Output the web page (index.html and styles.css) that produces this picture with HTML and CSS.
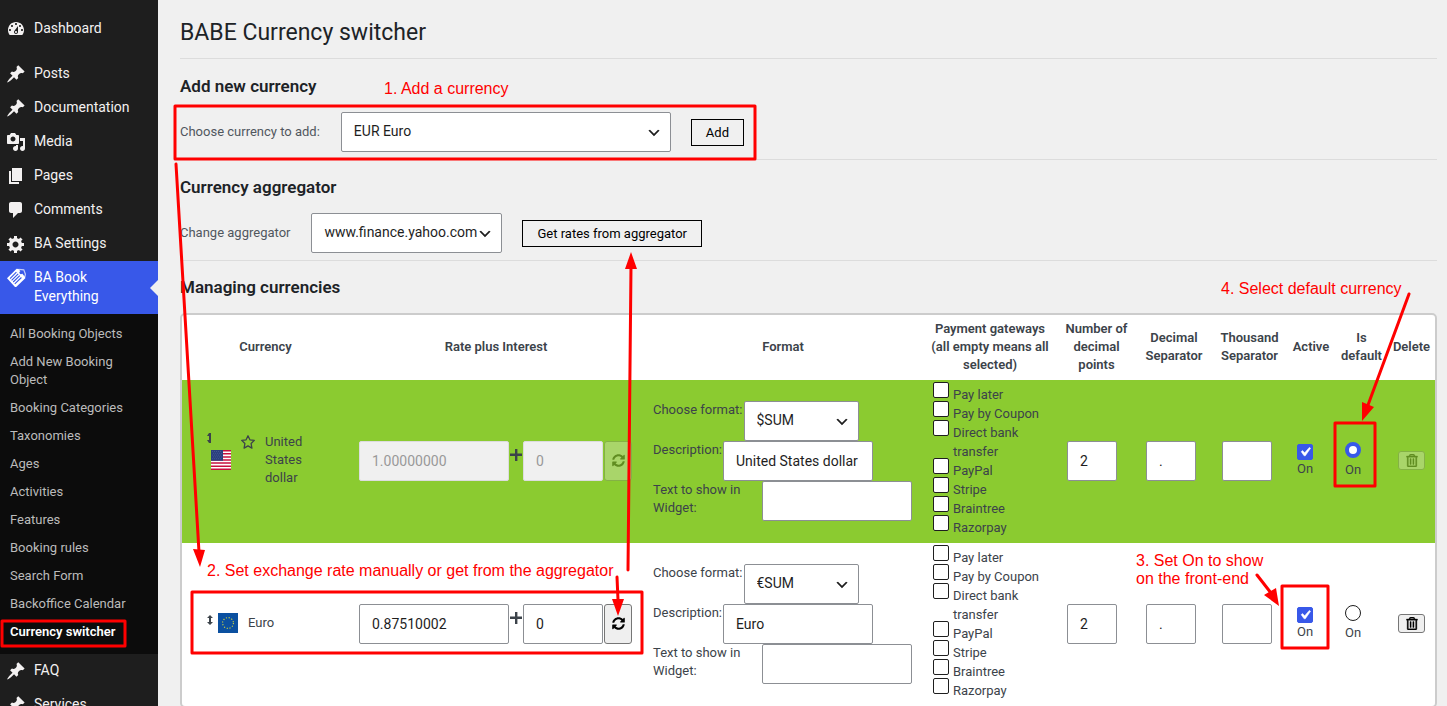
FILE: index.html
```html
<!DOCTYPE html>
<html lang="en">
<head>
    <meta charset="UTF-8">
    <meta name="viewport" content="width=device-width, initial-scale=1.0">
    <title>BABE Currency switcher</title>
    <link rel="stylesheet" href="styles.css">
</head>
<body>
    <svg class="defs" aria-hidden="true">
        <symbol id="i-dashboard" viewBox="0 0 20 20"><path d="M3.76 16h12.48c1.1-1.37 1.76-3.11 1.76-5 0-4.42-3.58-8-8-8s-8 3.58-8 8c0 1.89.66 3.63 1.76 5zM10 4c.55 0 1 .45 1 1s-.45 1-1 1-1-.45-1-1 .45-1 1-1zM6 6c.55 0 1 .45 1 1s-.45 1-1 1-1-.45-1-1 .45-1 1-1zm8 0c.55 0 1 .45 1 1s-.45 1-1 1-1-.45-1-1 .45-1 1-1zm-5.37 5.55L12 7v6c0 1.1-.9 2-2 2s-2-.9-2-2c0-.57.24-1.08.63-1.45zM4 10c.55 0 1 .45 1 1s-.45 1-1 1-1-.45-1-1 .45-1 1-1zm12 0c.55 0 1 .45 1 1s-.45 1-1 1-1-.45-1-1 .45-1 1-1zm-5 3c0-.55-.45-1-1-1s-1 .45-1 1 .45 1 1 1 1-.45 1-1z" fill-rule="evenodd"/></symbol>
        <symbol id="i-pin" viewBox="0 0 20 20"><path d="M10.44 3.02l1.82-1.82 6.36 6.35-1.83 1.82c-1.05-.68-2.48-.57-3.41.36l-.75.75c-.92.93-1.04 2.35-.35 3.41l-1.83 1.82-2.41-2.41-2.8 2.79c-.42.42-3.38 2.71-3.8 2.29s1.86-3.39 2.28-3.81l2.79-2.79L4.1 9.36l1.83-1.82c1.05.69 2.48.57 3.4-.36l.75-.75c.93-.92 1.05-2.35.36-3.41z"/></symbol>
        <symbol id="i-media" viewBox="0 0 20 20"><path d="M13 11V4c0-.55-.45-1-1-1h-1.67L9 1H5L3.67 3H2c-.55 0-1 .45-1 1v7c0 .55.45 1 1 1h10c.55 0 1-.45 1-1zM7 4.5c1.38 0 2.5 1.12 2.5 2.5S8.38 9.5 7 9.5 4.5 8.38 4.5 7 5.62 4.5 7 4.5zM14 6h5v10.5c0 1.38-1.12 2.5-2.5 2.5S14 17.88 14 16.5s1.12-2.5 2.5-2.5c.17 0 .34.02.5.05V9h-3V6zm-4 8.05V13h2v3.5c0 1.38-1.12 2.5-2.5 2.5S7 17.88 7 16.5 8.12 14 9.5 14c.17 0 .34.02.5.05z" fill-rule="evenodd"/></symbol>
        <symbol id="i-page" viewBox="0 0 20 20"><path d="M6 15V2h10v13H6zm-1 1h8v2H3V5h2v11z"/></symbol>
        <symbol id="i-comment" viewBox="0 0 20 20"><path d="M5 2h9c1.1 0 2 .9 2 2v7c0 1.1-.9 2-2 2h-2l-5 5v-5H5c-1.1 0-2-.9-2-2V4c0-1.1.9-2 2-2z"/></symbol>
        <symbol id="i-gear" viewBox="0 0 20 20"><path d="M18 12h-2.18c-.17.7-.44 1.35-.81 1.93l1.54 1.54-2.1 2.1-1.54-1.54c-.58.36-1.23.63-1.91.79V19H8v-2.18c-.68-.16-1.33-.43-1.91-.79l-1.54 1.54-2.12-2.12 1.54-1.54c-.36-.58-.63-1.23-.79-1.91H1V9.03h2.17c.16-.7.44-1.35.8-1.94L2.43 5.55l2.1-2.1 1.54 1.54c.58-.37 1.24-.64 1.93-.81V2h3v2.18c.68.16 1.33.43 1.91.79l1.54-1.54 2.12 2.12-1.54 1.54c.36.59.64 1.24.8 1.94H18V12zm-8.5 1.5c1.66 0 3-1.34 3-3s-1.34-3-3-3-3 1.34-3 3 1.34 3 3 3z" fill-rule="evenodd"/></symbol>
        <symbol id="i-refresh" viewBox="0 0 512 512"><path d="M370.72 133.28C339.458 104.008 298.888 87.962 255.848 88c-77.458.068-144.328 53.178-162.791 126.85-1.344 5.363-6.122 9.15-11.651 9.15H24.103c-7.498 0-13.194-6.807-11.807-14.176C33.933 94.924 134.813 8 256 8c66.448 0 126.791 26.136 171.315 68.685L463.03 40.97C478.149 25.851 504 36.559 504 57.941V192c0 13.255-10.745 24-24 24H345.941c-21.382 0-32.09-25.851-16.971-40.971l41.75-41.749zM32 296h134.059c21.382 0 32.09 25.851 16.971 40.971l-41.75 41.75c31.262 29.273 71.835 45.319 114.876 45.28 77.418-.07 144.315-53.144 162.787-126.849 1.344-5.363 6.122-9.15 11.651-9.15h57.304c7.498 0 13.194 6.807 11.807 14.176C478.067 417.076 377.187 504 256 504c-66.448 0-126.791-26.136-171.315-68.685L48.97 471.03C33.851 486.149 8 475.441 8 454.059V320c0-13.255 10.745-24 24-24z"/></symbol>
        <symbol id="i-trash" viewBox="0 0 448 512"><path stroke="currentColor" stroke-width="14" d="M268 416h24a12 12 0 0 0 12-12V188a12 12 0 0 0-12-12h-24a12 12 0 0 0-12 12v216a12 12 0 0 0 12 12zM432 80h-82.41l-34-56.7A48 48 0 0 0 274.41 0H173.59a48 48 0 0 0-41.16 23.3L98.41 80H16A16 16 0 0 0 0 96v16a16 16 0 0 0 16 16h16v336a48 48 0 0 0 48 48h288a48 48 0 0 0 48-48V128h16a16 16 0 0 0 16-16V96a16 16 0 0 0-16-16zM171.84 50.91A6 6 0 0 1 177 48h94a6 6 0 0 1 5.15 2.91L293.61 80H154.39zM368 464H80V128h288zm-212-48h24a12 12 0 0 0 12-12V188a12 12 0 0 0-12-12h-24a12 12 0 0 0-12 12v216a12 12 0 0 0 12 12z"/></symbol>
        <symbol id="i-plus" viewBox="0 0 12 12"><path d="M5 0h2.4v4.6H12V7H7.4v5H5V7H0V4.6h5z"/></symbol>
        <symbol id="i-sort" viewBox="0 0 6 10"><path d="M3 0l3 3H4v4h2l-3 3-3-3h2V3H0z"/></symbol>
        <symbol id="i-star" viewBox="0 0 14 14"><path d="M7 .8l1.9 4 4.4.6-3.2 3.1.8 4.6L7 10.9l-3.9 2.2.8-4.6L.7 5.4l4.4-.6z" fill="none" stroke="currentColor" stroke-width="1.3" stroke-linejoin="round"/></symbol>
        <symbol id="i-ticket" viewBox="0 0 20 20">
            <path d="M1 10.3L10.6.8l1.9.2 6.7 8.3.1 1L10.2 19H9z"/>
            <path d="M12.5 1.4l5.3.4 1.6 4.4-.6 3" fill="none" stroke="#fff" stroke-width="1.2" stroke-opacity=".7"/>
            <circle cx="15" cy="4.6" r="1.6" fill="#3858e9"/>
            <path d="M4 10.6l6.4-6.4M5.6 12.3l6.6-6.4M7.2 14l6.6-6.3M8.8 15.8l6.6-6.3" stroke="#3858e9" stroke-width="1.1"/>
        </symbol>
    </svg>

    <div class="layout">
        <nav class="sidebar">
            <a class="menu-item menu-first" href="#"><svg class="menu-icon"><use href="#i-dashboard"/></svg><span>Dashboard</span></a>
            <a class="menu-item" href="#"><svg class="menu-icon"><use href="#i-pin"/></svg><span>Posts</span></a>
            <a class="menu-item" href="#"><svg class="menu-icon"><use href="#i-pin"/></svg><span>Documentation</span></a>
            <a class="menu-item" href="#"><svg class="menu-icon"><use href="#i-media"/></svg><span>Media</span></a>
            <a class="menu-item" href="#"><svg class="menu-icon"><use href="#i-page"/></svg><span>Pages</span></a>
            <a class="menu-item" href="#"><svg class="menu-icon"><use href="#i-comment"/></svg><span>Comments</span></a>
            <a class="menu-item" href="#"><svg class="menu-icon"><use href="#i-gear"/></svg><span>BA Settings</span></a>
            <a class="menu-item current" href="#"><svg class="menu-icon"><use href="#i-ticket"/></svg><span>BA Book Everything</span></a>
            <div class="submenu">
                <a href="#">All Booking Objects</a>
                <a href="#">Add New Booking Object</a>
                <a href="#">Booking Categories</a>
                <a href="#">Taxonomies</a>
                <a href="#">Ages</a>
                <a href="#">Activities</a>
                <a href="#">Features</a>
                <a href="#">Booking rules</a>
                <a href="#">Search Form</a>
                <a href="#">Backoffice Calendar</a>
                <a class="active" href="#">Currency switcher</a>
            </div>
            <a class="menu-item" href="#"><svg class="menu-icon"><use href="#i-pin"/></svg><span>FAQ</span></a>
            <a class="menu-item" href="#"><svg class="menu-icon"><use href="#i-pin"/></svg><span>Services</span></a>
        </nav>

        <main class="content">
            <h1>BABE Currency switcher</h1>

            <section>
                <h2>Add new currency</h2>
                <div class="form-row">
                    <label for="currency">Choose currency to add:</label>
                    <select id="currency" class="select-currency"><option>EUR Euro</option></select>
                    <button type="button" class="btn">Add</button>
                </div>
            </section>

            <section>
                <h2>Currency aggregator</h2>
                <div class="form-row">
                    <label for="aggregator">Change aggregator</label>
                    <select id="aggregator" class="select-aggregator"><option>www.finance.yahoo.com</option></select>
                    <button type="button" class="btn">Get rates from aggregator</button>
                </div>
            </section>

            <section class="managing">
                <h2>Managing currencies</h2>
                <div class="table-container">
                    <table>
                        <colgroup>
                            <col>
                            <col class="col-rate">
                            <col class="col-format">
                            <col class="col-gateways">
                            <col class="col-points">
                            <col class="col-decimal">
                            <col class="col-thousand">
                            <col class="col-active">
                            <col class="col-default">
                            <col class="col-delete">
                        </colgroup>
                        <thead>
                            <tr>
                                <th>Currency</th>
                                <th>Rate plus Interest</th>
                                <th>Format</th>
                                <th>Payment gateways (all empty means all selected)</th>
                                <th>Number of decimal points</th>
                                <th>Decimal Separator</th>
                                <th>Thousand Separator</th>
                                <th>Active</th>
                                <th>Is default</th>
                                <th>Delete</th>
                            </tr>
                        </thead>
                        <tbody>
                            <tr class="is-default">
                                <td class="cell-currency">
                                    <div class="currency">
                                        <svg class="handle handle-narrow" viewBox="0 0 4 10"><path d="M2 0h2v10H2L0 7h2V3H0z"/></svg>
                                        <svg class="flag" viewBox="0 0 20 20">
                                            <path fill="#fff" d="M0 0h20v20H0z"/>
                                            <path stroke="#c8103e" stroke-width="1.54" d="M0 .77h20M0 3.85h20M0 6.92h20M0 10h20M0 13.08h20M0 16.15h20M0 19.23h20"/>
                                            <path fill="#2a3f7e" d="M0 0h12v10.8H0z"/>
                                            <path stroke="#6f7fb0" stroke-width=".6" stroke-dasharray=".6 1.4" d="M1 1.5h10M2 3.3h9M1 5.1h10M2 6.9h9M1 8.7h10"/>
                                        </svg>
                                        <svg class="star"><use href="#i-star"/></svg>
                                        <span>United States dollar</span>
                                    </div>
                                </td>
                                <td class="cell-rate">
                                    <div class="rate">
                                        <input type="text" class="field" value="1.00000000" aria-label="USD rate" disabled>
                                        <svg class="plus"><use href="#i-plus"/></svg>
                                        <input type="text" class="field field-interest" value="0" aria-label="USD interest" disabled>
                                        <button type="button" class="btn-refresh" aria-label="Refresh USD rate" disabled><svg><use href="#i-refresh"/></svg></button>
                                    </div>
                                </td>
                                <td class="cell-format">
                                    <div class="format-row"><label for="usd-format">Choose format:</label><select id="usd-format" class="select-format"><option>$SUM</option></select></div>
                                    <div class="format-row"><label for="usd-desc">Description:</label><input type="text" class="field" id="usd-desc" value="United States dollar"></div>
                                    <div class="format-row"><label for="usd-text">Text to show in Widget:</label><input type="text" class="field" id="usd-text"></div>
                                </td>
                                <td class="cell-gateways">
                                    <label><input type="checkbox"><span>Pay later</span></label>
                                    <label><input type="checkbox"><span>Pay by Coupon</span></label>
                                    <label><input type="checkbox"><span>Direct bank transfer</span></label>
                                    <label><input type="checkbox"><span>PayPal</span></label>
                                    <label><input type="checkbox"><span>Stripe</span></label>
                                    <label><input type="checkbox"><span>Braintree</span></label>
                                    <label><input type="checkbox"><span>Razorpay</span></label>
                                </td>
                                <td><input type="text" class="field field-small" value="2" aria-label="USD decimal points"></td>
                                <td><input type="text" class="field field-small" value="." aria-label="USD decimal separator"></td>
                                <td><input type="text" class="field field-small" aria-label="USD thousand separator"></td>
                                <td><label class="toggle"><input type="checkbox" checked><span>On</span></label></td>
                                <td><label class="toggle"><input type="radio" name="default" checked><span>On</span></label></td>
                                <td><button type="button" class="btn-delete" aria-label="Delete USD" disabled><svg><use href="#i-trash"/></svg></button></td>
                            </tr>
                            <tr>
                                <td class="cell-currency">
                                    <div class="currency">
                                        <svg class="handle"><use href="#i-sort"/></svg>
                                        <svg class="flag" viewBox="0 0 20 20">
                                            <path fill="#0b50a0" d="M0 0h20v20H0z"/>
                                            <circle cx="10" cy="10" r="5.4" fill="none" stroke="#d6d93a" stroke-width="1.1" stroke-dasharray="1.1 1.73"/>
                                        </svg>
                                        <span>Euro</span>
                                    </div>
                                </td>
                                <td class="cell-rate">
                                    <div class="rate">
                                        <input type="text" class="field" value="0.87510002" aria-label="EUR rate">
                                        <svg class="plus"><use href="#i-plus"/></svg>
                                        <input type="text" class="field field-interest" value="0" aria-label="EUR interest">
                                        <button type="button" class="btn-refresh" aria-label="Refresh EUR rate"><svg><use href="#i-refresh"/></svg></button>
                                    </div>
                                </td>
                                <td class="cell-format">
                                    <div class="format-row"><label for="eur-format">Choose format:</label><select id="eur-format" class="select-format"><option>€SUM</option></select></div>
                                    <div class="format-row"><label for="eur-desc">Description:</label><input type="text" class="field" id="eur-desc" value="Euro"></div>
                                    <div class="format-row"><label for="eur-text">Text to show in Widget:</label><input type="text" class="field" id="eur-text"></div>
                                </td>
                                <td class="cell-gateways">
                                    <label><input type="checkbox"><span>Pay later</span></label>
                                    <label><input type="checkbox"><span>Pay by Coupon</span></label>
                                    <label><input type="checkbox"><span>Direct bank transfer</span></label>
                                    <label><input type="checkbox"><span>PayPal</span></label>
                                    <label><input type="checkbox"><span>Stripe</span></label>
                                    <label><input type="checkbox"><span>Braintree</span></label>
                                    <label><input type="checkbox"><span>Razorpay</span></label>
                                </td>
                                <td><input type="text" class="field field-small" value="2" aria-label="EUR decimal points"></td>
                                <td><input type="text" class="field field-small" value="." aria-label="EUR decimal separator"></td>
                                <td><input type="text" class="field field-small" aria-label="EUR thousand separator"></td>
                                <td><label class="toggle"><input type="checkbox" checked><span>On</span></label></td>
                                <td><label class="toggle"><input type="radio" name="default"><span>On</span></label></td>
                                <td><button type="button" class="btn-delete" aria-label="Delete EUR"><svg><use href="#i-trash"/></svg></button></td>
                            </tr>
                        </tbody>
                    </table>
                </div>
            </section>
        </main>
    </div>

    <!-- Step-by-step notes on top of the screen -->
    <div class="notes">
        <svg class="notes-lines">
            <g fill="none" stroke="#f00" stroke-width="3" stroke-linejoin="round" stroke-linecap="round">
                <rect x="175" y="106" width="580" height="53"/>
                <rect x="192" y="592" width="450" height="61"/>
                <rect x="1335" y="423" width="40" height="63"/>
                <rect x="1282" y="586" width="46" height="62"/>
                <rect x="2" y="621" width="123" height="25"/>
                <path d="M176 164L199 552M628 570L631 266M617 577L618 600M1409 294L1368 405M1257 575L1271 593"/>
            </g>
            <path fill="#f00" d="M193 549l12 1-5 17zM625 269l6-17 6 17zM612 599h12l-6 17zM1362 402l12 5-12 14zM1264 595l12-7 3 18z"/>
        </svg>
        <p class="note note-1">1. Add a currency</p>
        <p class="note note-2">2. Set exchange rate manually or get from the aggregator</p>
        <p class="note note-3">3. Set On to show<br>on the front-end</p>
        <p class="note note-4">4. Select default currency</p>
    </div>
</body>
</html>
```
FILE: styles.css
```css
* {
    box-sizing: border-box;
}
body {
    margin: 0;
    height: 100vh;
    overflow: hidden;
    background: #f0f0f0;
    color: #3c434a;
    font: 13px/18px Roboto, sans-serif;
}
a {
    text-decoration: none;
}
svg {
    fill: currentColor;
    flex: none;
    display: block;
}
.defs {
    position: absolute;
    width: 0;
    height: 0;
}
.layout {
    display: flex;
    min-height: 100vh;
}

/* Sidebar */
.sidebar {
    width: 158px;
    flex: none;
    padding-top: 12px;
    background: #1e1e1e;
}
.menu-item {
    display: flex;
    gap: 8px;
    padding: 7px 30px 8px 6px;
    color: #f3f1f1;
    font-size: 14px;
    line-height: 19px;
}
.menu-first {
    margin-bottom: 11px;
}
.menu-icon {
    width: 20px;
    height: 20px;
    margin-bottom: -1px;
}
.menu-item.current {
    position: relative;
    background: #3858e9;
    color: #fff;
}
.menu-item.current::after {
    content: "";
    position: absolute;
    right: 0;
    top: 50%;
    margin-top: -8px;
    border: 8px solid transparent;
    border-right-color: #f0f0f0;
    border-left: 0;
}
.submenu {
    padding: 6px 0 8px;
    background: #0c0c0c;
}
.submenu a {
    display: block;
    padding: 5px 10px;
    color: #bbb;
}
.submenu .active {
    color: #fff;
    font-weight: 600;
}

/* Content */
.content {
    flex: 1;
    min-width: 0;
    padding: 0 10px 0 22px;
}
h1 {
    margin: 0;
    padding: 18px 0 10px;
    border-bottom: 1px solid #dcdcdc;
    color: #1d2327;
    font-size: 23px;
    font-weight: 400;
    line-height: 30px;
}
h2 {
    margin: 0 0 16px;
    color: #1d2327;
    font-size: 17px;
    font-weight: 600;
    line-height: 19px;
}
section {
    padding: 18px 0 7px;
    border-bottom: 1px solid #dcdcdc;
}
.managing {
    padding-top: 17px;
    border-bottom: 0;
}
.form-row {
    display: flex;
    align-items: center;
    gap: 20px;
    color: #50575e;
}
.form-row label {
    padding-right: 1px;
}

/* Controls */
select,
.field {
    height: 40px;
    margin: 0;
    padding: 0 12px;
    border: 1px solid #8c8f94;
    border-radius: 2px;
    background: #fff;
    color: #1e1e1e;
    font: 14px Roboto, sans-serif;
}
select {
    appearance: none;
    padding: 0 20px 2px 12px;
    background: #fff url("data:image/svg+xml,%3Csvg xmlns='http://www.w3.org/2000/svg' viewBox='0 0 20 20'%3E%3Cpath d='M5 6l5 5 5-5 2 1-7 7-7-7 2-1z' fill='%231e1e1e'/%3E%3C/svg%3E") no-repeat right 8px top 55%;
    background-size: 16px 16px;
}
.select-currency {
    width: 330px;
}
.select-aggregator {
    width: 191px;
}
.select-format {
    width: 115px;
}
.field {
    width: 150px;
}
.field-interest {
    width: 80px;
}
.field-small {
    width: 50px;
    display: block;
}
.field:disabled {
    border-color: #dcdcde;
    background: #f0f0f0;
    color: #999;
}
.btn {
    height: 27px;
    padding: 0 14px;
    border: 1px solid #000;
    background: none;
    color: #000;
    font: 13px Roboto, sans-serif;
}
.btn-refresh,
.btn-delete {
    display: flex;
    align-items: center;
    justify-content: center;
    padding: 0;
    border: 1px solid #767676;
    border-radius: 3px;
    background: #efefef;
    color: #000;
}
.btn-refresh {
    width: 29px;
    height: 40px;
}
.btn-delete {
    width: 27px;
    height: 19px;
}
.btn-refresh:disabled,
.btn-delete:disabled {
    opacity: .3;
}
.btn-refresh svg {
    width: 13px;
    height: 13px;
}
.btn-delete svg {
    width: 12px;
    height: 13px;
}
input[type="checkbox"],
input[type="radio"] {
    appearance: none;
    flex: none;
    width: 16px;
    height: 16px;
    margin: 0;
    border: 1px solid #1e1e1e;
    border-radius: 2px;
    background: #fff;
}
input[type="checkbox"]:checked {
    border-color: #3858e9;
    background: #3858e9 url("data:image/svg+xml,%3Csvg xmlns='http://www.w3.org/2000/svg' viewBox='0 0 20 20'%3E%3Cpath d='M14.83 4.89l1.34.94-5.81 8.38H9.02L5.78 9.67l1.34-1.25 2.57 2.4z' fill='%23fff' stroke='%23fff' stroke-width='.6'/%3E%3C/svg%3E") center / 18px no-repeat;
}
input[type="radio"] {
    margin-bottom: 3px;
    border-radius: 50%;
}
input[type="radio"]:checked {
    border: 4px solid #3858e9;
}

/* Currency table */
.table-container {
    border: 2px solid #ccc;
    border-radius: 5px;
    background: #fff;
    overflow: hidden;
}
table {
    width: 100%;
    table-layout: fixed;
    border-collapse: collapse;
}
.col-rate {
    width: 294px;
}
.col-format {
    width: 280px;
}
.col-gateways {
    width: 134px;
}
.col-points {
    width: 79px;
}
.col-decimal {
    width: 76px;
}
.col-thousand {
    width: 75px;
}
.col-active {
    width: 48px;
}
.col-default {
    width: 53px;
}
.col-delete {
    width: 47px;
}
th {
    padding: 5px 4px 6px;
    font-weight: 600;
}
td {
    padding: 0 10px 2px;
}
.is-default {
    background: #8bcb30;
}
.cell-currency {
    padding: 0 20px 4px 25px;
}
.cell-rate,
.cell-format {
    padding-right: 11px;
}
.cell-gateways {
    padding: 5px 9px 6px 10px;
    line-height: 19px;
}
.cell-gateways label {
    display: flex;
    gap: 4px;
}
.cell-gateways input {
    margin-top: -3px;
}
.currency {
    display: flex;
    align-items: center;
    gap: 10px;
}
.handle {
    width: 6px;
    height: 10px;
    margin-right: -5px;
    margin-bottom: 6px;
}
.handle-narrow {
    width: 4px;
    margin-right: -10px;
    align-self: flex-start;
}
.flag {
    width: 20px;
    height: 20px;
}
.star {
    width: 14px;
    height: 14px;
    margin-top: 2px;
    align-self: flex-start;
}
.rate {
    display: flex;
    gap: 1px;
}
.plus {
    width: 12px;
    height: 12px;
    margin-top: 8px;
}
.format-row {
    display: flex;
    gap: 1px;
}
.format-row select,
.format-row .field {
    flex: none;
}
.toggle {
    display: flex;
    flex-direction: column;
    align-items: center;
    width: 16px;
}

/* Notes */
.notes {
    position: absolute;
    inset: 0;
    overflow: hidden;
    pointer-events: none;
}
.notes-lines {
    width: 100%;
    height: 100%;
}
.note {
    position: absolute;
    margin: 0;
    color: #f00;
    font: 16px/18px "Liberation Sans", Arial, sans-serif;
    white-space: nowrap;
}
.note-1 {
    left: 384px;
    top: 80px;
}
.note-2 {
    left: 207px;
    top: 562px;
}
.note-3 {
    left: 1136px;
    top: 552px;
}
.note-4 {
    left: 1221px;
    top: 280px;
}
```
